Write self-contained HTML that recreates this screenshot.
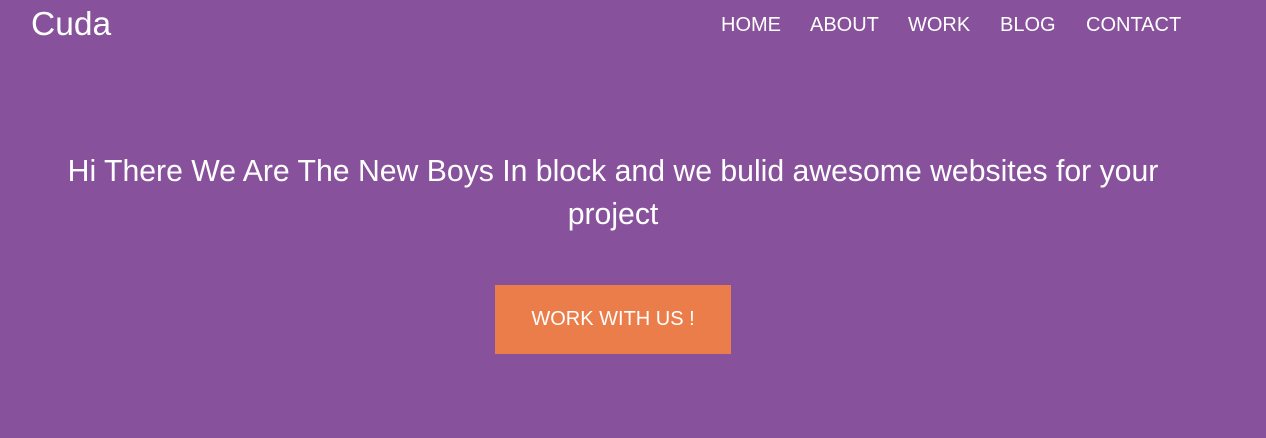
<!DOCTYPE html>
<html><head><style>
html,body{margin:0;padding:0;}
body{width:1266px;height:438px;background:#87519b;font-family:"Liberation Sans",Arial,sans-serif;color:#fff;position:relative;overflow:hidden;}
.logo{position:absolute;left:31px;top:5px;font-size:33.5px;line-height:40px;}
.nav{position:absolute;top:13px;left:0;font-size:20px;line-height:24px;}
.nav span{position:absolute;white-space:nowrap;}
h1{position:absolute;left:0;width:1226px;top:150px;margin:0;text-align:center;font-weight:normal;font-size:30.2px;line-height:43px;}
.btn{position:absolute;left:495px;top:285px;width:236px;height:69px;background:#eb7d4b;text-align:center;line-height:69px;font-size:20px;}
</style></head><body>
<div class="logo">Cuda</div>
<div class="nav">
<span style="left:721px">HOME</span>
<span style="left:810px">ABOUT</span>
<span style="left:908px">WORK</span>
<span style="left:1000px">BLOG</span>
<span style="left:1086px">CONTACT</span>
</div>
<h1>Hi There We Are The New Boys In block and we bulid awesome websites for your<br>project</h1>
<div class="btn">WORK WITH US !</div>
</body></html>
